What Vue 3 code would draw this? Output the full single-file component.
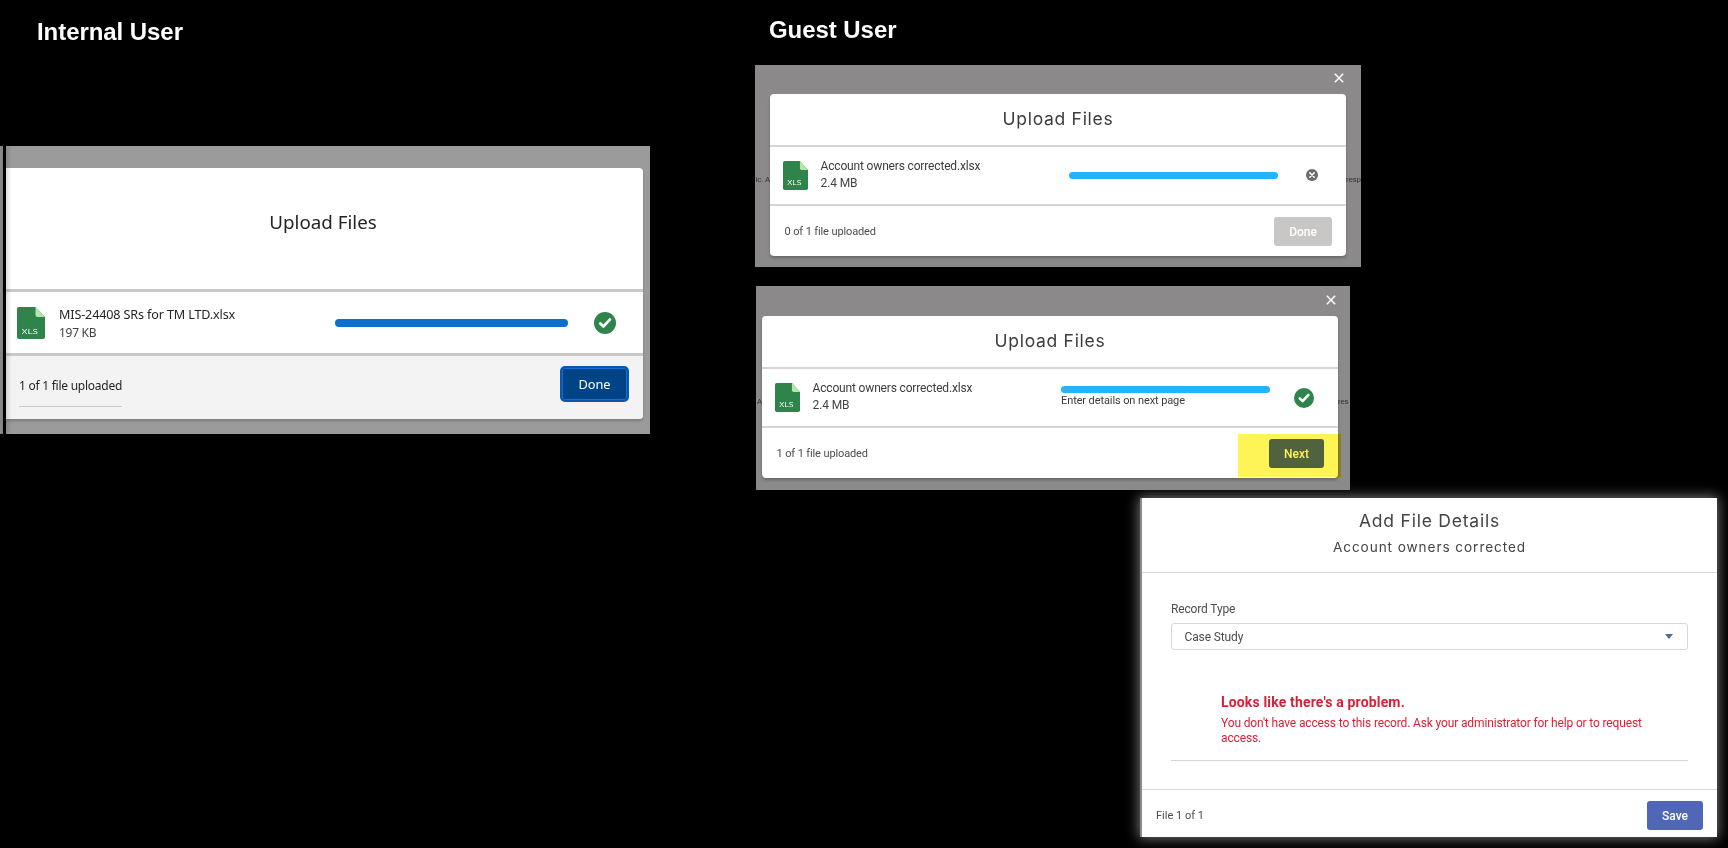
<script setup>
const guestPanels = [
  { id: 'pending', left: 'ic. A', right: 'resp', count: '0 of 1 file uploaded', action: 'Done', done: false },
  { id: 'complete', left: 'A', right: 'res', count: '1 of 1 file uploaded', action: 'Next', done: true, note: 'Enter details on next page' },
]
</script>

<template>
  <main class="stage">
    <section class="internal">
      <h1 class="heading">Internal User</h1>
      <div class="backdrop">
        <i class="edge"></i><i class="gap"></i>
        <div class="modal">
          <header class="modal-head">Upload Files</header>
          <div class="file-row">
            <svg class="xls" viewBox="0 0 28 32">
              <path d="M2 0H18.5L28 10V30a2 2 0 0 1-2 2H2a2 2 0 0 1-2-2V2a2 2 0 0 1 2-2z" fill="#2e844a" />
              <path d="M18.5 0L28 10H20.5a2 2 0 0 1-2-2z" fill="#b7e6ad" />
              <text x="4.8" y="26.8" textLength="16" lengthAdjust="spacingAndGlyphs" class="xls-text">XLS</text>
            </svg>
            <div class="file-meta"><span class="name">MIS-24408 SRs for TM LTD.xlsx</span><span class="size">197 KB</span></div>
            <div class="bar"></div>
            <svg class="check" viewBox="0 0 22 22">
              <circle cx="11" cy="11" r="11" fill="#2e844a" />
              <path d="M6.3 11.4l3.2 3 6.4-6.8" fill="none" stroke="#fff" stroke-width="2.8" stroke-linejoin="round" stroke-linecap="round" />
            </svg>
          </div>
          <footer class="modal-foot"><span class="count">1 of 1 file uploaded</span><button class="done">Done</button></footer>
        </div>
      </div>
    </section>

    <section class="guest">
      <h1 class="heading">Guest User</h1>
      <div v-for="p in guestPanels" :key="p.id" class="g-panel" :class="p.id">
        <div class="g-top">
          <svg class="close" viewBox="0 0 10 10"><path d="M.8.8l8.4 8.4M9.2.8L.8 9.2" stroke="#fff" stroke-width="1.5" /></svg>
        </div>
        <div class="g-mid">
          <span class="page-text page-left">{{ p.left }}</span>
          <div class="g-modal">
            <header class="g-head">Upload Files</header>
            <div class="g-row">
              <svg class="g-xls" viewBox="0 0 28 32" preserveAspectRatio="none">
                <path d="M2 0H19L28 10V30a2 2 0 0 1-2 2H2a2 2 0 0 1-2-2V2a2 2 0 0 1 2-2z" fill="#2e844a" />
                <path d="M19 0L28 10H21a2 2 0 0 1-2-2z" fill="#b7e6ad" />
                <text x="4.8" y="26.8" textLength="16" lengthAdjust="spacingAndGlyphs" class="xls-text">XLS</text>
              </svg>
              <div class="g-meta"><span class="g-name">Account owners corrected.xlsx</span><span class="g-size">2.4 MB</span></div>
              <div class="g-progress"><div class="g-bar"></div><span v-if="p.note" class="g-note">{{ p.note }}</span></div>
              <svg v-if="p.done" class="g-check" viewBox="0 0 22 22">
                <circle cx="11" cy="11" r="11" fill="#2e844a" />
                <path d="M6.3 11.4l3.2 3 6.4-6.8" fill="none" stroke="#fff" stroke-width="2.8" stroke-linejoin="round" stroke-linecap="round" />
              </svg>
              <svg v-else class="g-cancel" viewBox="0 0 12 12">
                <circle cx="6" cy="6" r="6" fill="#6b6b6b" />
                <path d="M3.8 3.8l4.4 4.4M8.2 3.8L3.8 8.2" stroke="#fff" stroke-width="1.6" stroke-linecap="round" />
              </svg>
            </div>
            <footer class="g-foot"><span class="g-count">{{ p.count }}</span><button class="g-btn">{{ p.action }}</button></footer>
          </div>
          <span class="page-text page-right">{{ p.right }}</span>
        </div>
        <i v-if="p.done" class="marker"></i>
      </div>

      <div class="details">
        <header class="d-head"><h2>Add File Details</h2><h3>Account owners corrected</h3></header>
        <div class="d-body">
          <label class="d-label">Record Type</label>
          <div class="select"><span>Case Study</span><svg viewBox="0 0 8 5"><path d="M0 0h8L4 5z" fill="#54698d" /></svg></div>
          <div class="error">
            <strong>Looks like there's a problem.</strong>
            <p>You don't have access to this record. Ask your administrator for help or to request<br />access.</p>
          </div>
        </div>
        <footer class="d-foot"><span>File 1 of 1</span><button class="save">Save</button></footer>
      </div>
    </section>
  </main>
</template>

<style>
html, body { background: #000; overflow: hidden; }
</style>

<style scoped>
* { box-sizing: border-box; margin: 0; padding: 0; }
.stage { width: 1728px; height: 848px; background: #000; display: flex; overflow: hidden; white-space: nowrap; font-family: Roboto, sans-serif; }
button { border: 0; font-family: inherit; display: block; }
svg { display: block; flex: none; }
.heading { font: bold 24px/28px "Liberation Sans", sans-serif; color: #fff; letter-spacing: -.06px; }
.xls-text { font: 8px "Open Sans", sans-serif; fill: #fff; }

.internal { width: 755px; flex: none; padding-top: 18px; }
.internal .heading { margin-left: 37px; height: 128px; }
.backdrop { width: 650px; height: 288px; background: #9b9b9b; display: flex; align-items: stretch; font-family: "Noto Sans", sans-serif; }
.edge { width: 3px; background: #8c8c8c; }
.gap { width: 3px; background: #000; box-shadow: 1px 0 5px rgba(0,0,0,.3); position: relative; }
.modal { width: 637px; height: 251px; margin-top: 22px; background: #fff; border-radius: 0 4px 4px 0; overflow: hidden; box-shadow: 0 2px 3px rgba(0,0,0,.2); }
.modal-head { height: 124px; border-bottom: 3px solid #c9c9c9; text-align: center; line-height: 108px; font-size: 18.8px; color: #242424; padding-right: 3px; }
.file-row { height: 64px; border-bottom: 3px solid #c9c9c9; display: flex; align-items: center; padding-left: 11px; }
.xls { width: 28px; height: 32px; }
.file-meta { width: 276px; margin-left: 14px; flex: none; display: flex; flex-direction: column; padding-top: 3px; }
.name { font-size: 12.6px; line-height: 18px; color: #242424; letter-spacing: -.14px; }
.size { font-size: 12px; line-height: 18px; color: #444; letter-spacing: -.3px; }
.bar { width: 233px; height: 8px; border-radius: 4px; background: #0b70d0; flex: none; }
.check { width: 22px; height: 22px; margin-left: 26px; }
.modal-foot { height: 63px; background: #f3f3f3; display: flex; justify-content: space-between; align-items: flex-start; padding: 10px 14px 0 13px; }
.count { font-size: 12px; line-height: 18px; color: #242424; margin-top: 11px; height: 30px; border-bottom: 1px solid #c9c9c9; letter-spacing: -.25px; }
.done { width: 69px; height: 36px; border: 2px solid #0c55aa; box-shadow: inset 0 0 0 1px #0b70d8; background: #014486; color: #fff; border-radius: 5px; font-size: 12.8px; line-height: 31px; letter-spacing: -.1px; }

.guest { flex: 1; padding-top: 16px; }
.guest .heading { margin-left: 14px; height: 49px; }
.g-panel { position: relative; background: #8b8989; }
.pending { width: 606px; height: 202px; }
.complete { width: 594px; height: 204px; margin: 19px 0 0 1px; }
.g-top { height: 29px; display: flex; justify-content: flex-end; padding: 8px 17.5px 0 0; }
.complete .g-top { height: 30px; padding: 9px 14.5px 0 0; }
.close { width: 10px; height: 10px; }
.g-mid { display: flex; }
.page-text { width: 15px; flex: none; font-size: 8px; line-height: 12px; margin-top: 80px; height: 12px; color: #333; letter-spacing: -.2px; }
.page-left { display: flex; justify-content: flex-end; }
.complete .page-left { width: 6px; }
.complete .page-right { width: 12px; }
.g-modal { width: 576px; height: 162px; flex: none; background: #fff; border-radius: 4px; overflow: hidden; box-shadow: 0 2px 3px rgba(0,0,0,.25); }
.g-head { height: 53px; border-bottom: 2px solid #d4d4d4; text-align: center; line-height: 49px; font-family: Inter, sans-serif; font-size: 17.5px; letter-spacing: .7px; color: #3c3c3c; }
.g-row { height: 59px; border-bottom: 2px solid #d4d4d4; display: flex; align-items: center; padding-left: 13px; }
.g-xls { width: 25px; height: 29px; margin-top: -1px; }
.g-meta { margin-left: 12.5px; width: 248.5px; flex: none; display: flex; flex-direction: column; padding-bottom: 1px; }
.g-name { font-size: 12px; line-height: 17px; color: #3c3c3c; letter-spacing: -.16px; }
.g-size { font-size: 12px; line-height: 17px; color: #444; letter-spacing: -.1px; }
.g-progress { width: 209px; flex: none; margin-top: -1px; }
.complete .g-progress { margin-top: -3px; }
.g-bar { height: 7px; border-radius: 4px; background: #22b4fc; }
.g-note { display: block; height: 14px; line-height: 15px; font-size: 11px; color: #3c3c3c; letter-spacing: -.1px; }
.g-cancel { width: 12px; height: 12px; margin-left: 28px; margin-top: -1px; }
.g-check { width: 20px; height: 20px; margin-left: 24px; }
.g-foot { height: 50px; display: flex; justify-content: space-between; align-items: center; padding: 1px 14px 0 14.5px; }
.g-count { font-size: 11px; color: #4c4c4c; letter-spacing: -.12px; }
.g-btn { height: 29px; width: 58px; border-radius: 3px; background: #c9c7c5; color: #fff; font-size: 12px; font-weight: 500; line-height: 28px; letter-spacing: -.05px; }
.complete .g-btn { width: 55px; background: #5067b8; }
.marker { position: absolute; left: 482px; top: 148px; width: 103px; height: 43px; background: #fff455; mix-blend-mode: multiply; }

.details { width: 577px; height: 339px; margin: 8px 0 0 385px; background: #fff; border-left: 2px solid #8b8b8b; box-shadow: 0 0 12px 1px rgba(255,255,255,.48); color: #4c4c4c; }
.d-head { height: 75px; border-bottom: 1px solid #d8d8d8; text-align: center; font-family: Inter, sans-serif; padding-top: 10px; color: #444; }
.d-head h2 { font-weight: 400; font-size: 17.5px; line-height: 26px; letter-spacing: .78px; }
.d-head h3 { font-weight: 400; font-size: 13.6px; line-height: 27px; letter-spacing: .93px; }
.d-body { margin: 0 29px; height: 188px; border-bottom: 1px solid #d4d4d4; padding-top: 28px; }
.d-label { display: block; font-size: 12px; line-height: 16px; letter-spacing: -.15px; }
.select { height: 27px; width: 517px; margin-top: 6px; border: 1px solid #d8d8d8; border-radius: 3px; display: flex; justify-content: space-between; align-items: center; padding: 0 14px 0 12.5px; font-size: 12px; letter-spacing: -.12px; }
.select svg { width: 8px; height: 5px; margin-top: -1px; }
.error { padding-left: 50px; margin-top: 42px; color: #da1f36; }
.error strong { display: block; font-size: 14px; line-height: 20px; font-weight: 700; letter-spacing: .16px; }
.error p { font-size: 12px; line-height: 15px; margin-top: 4px; letter-spacing: -.14px; }
.d-foot { margin-top: 28px; height: 48px; border-top: 1px solid #d8d8d8; display: flex; justify-content: space-between; align-items: center; padding: 4px 14px 0; font-size: 11px; }
.save { width: 56px; height: 29px; border-radius: 3px; background: #5067b8; color: #fff; font-size: 12px; font-weight: 500; }
</style>
